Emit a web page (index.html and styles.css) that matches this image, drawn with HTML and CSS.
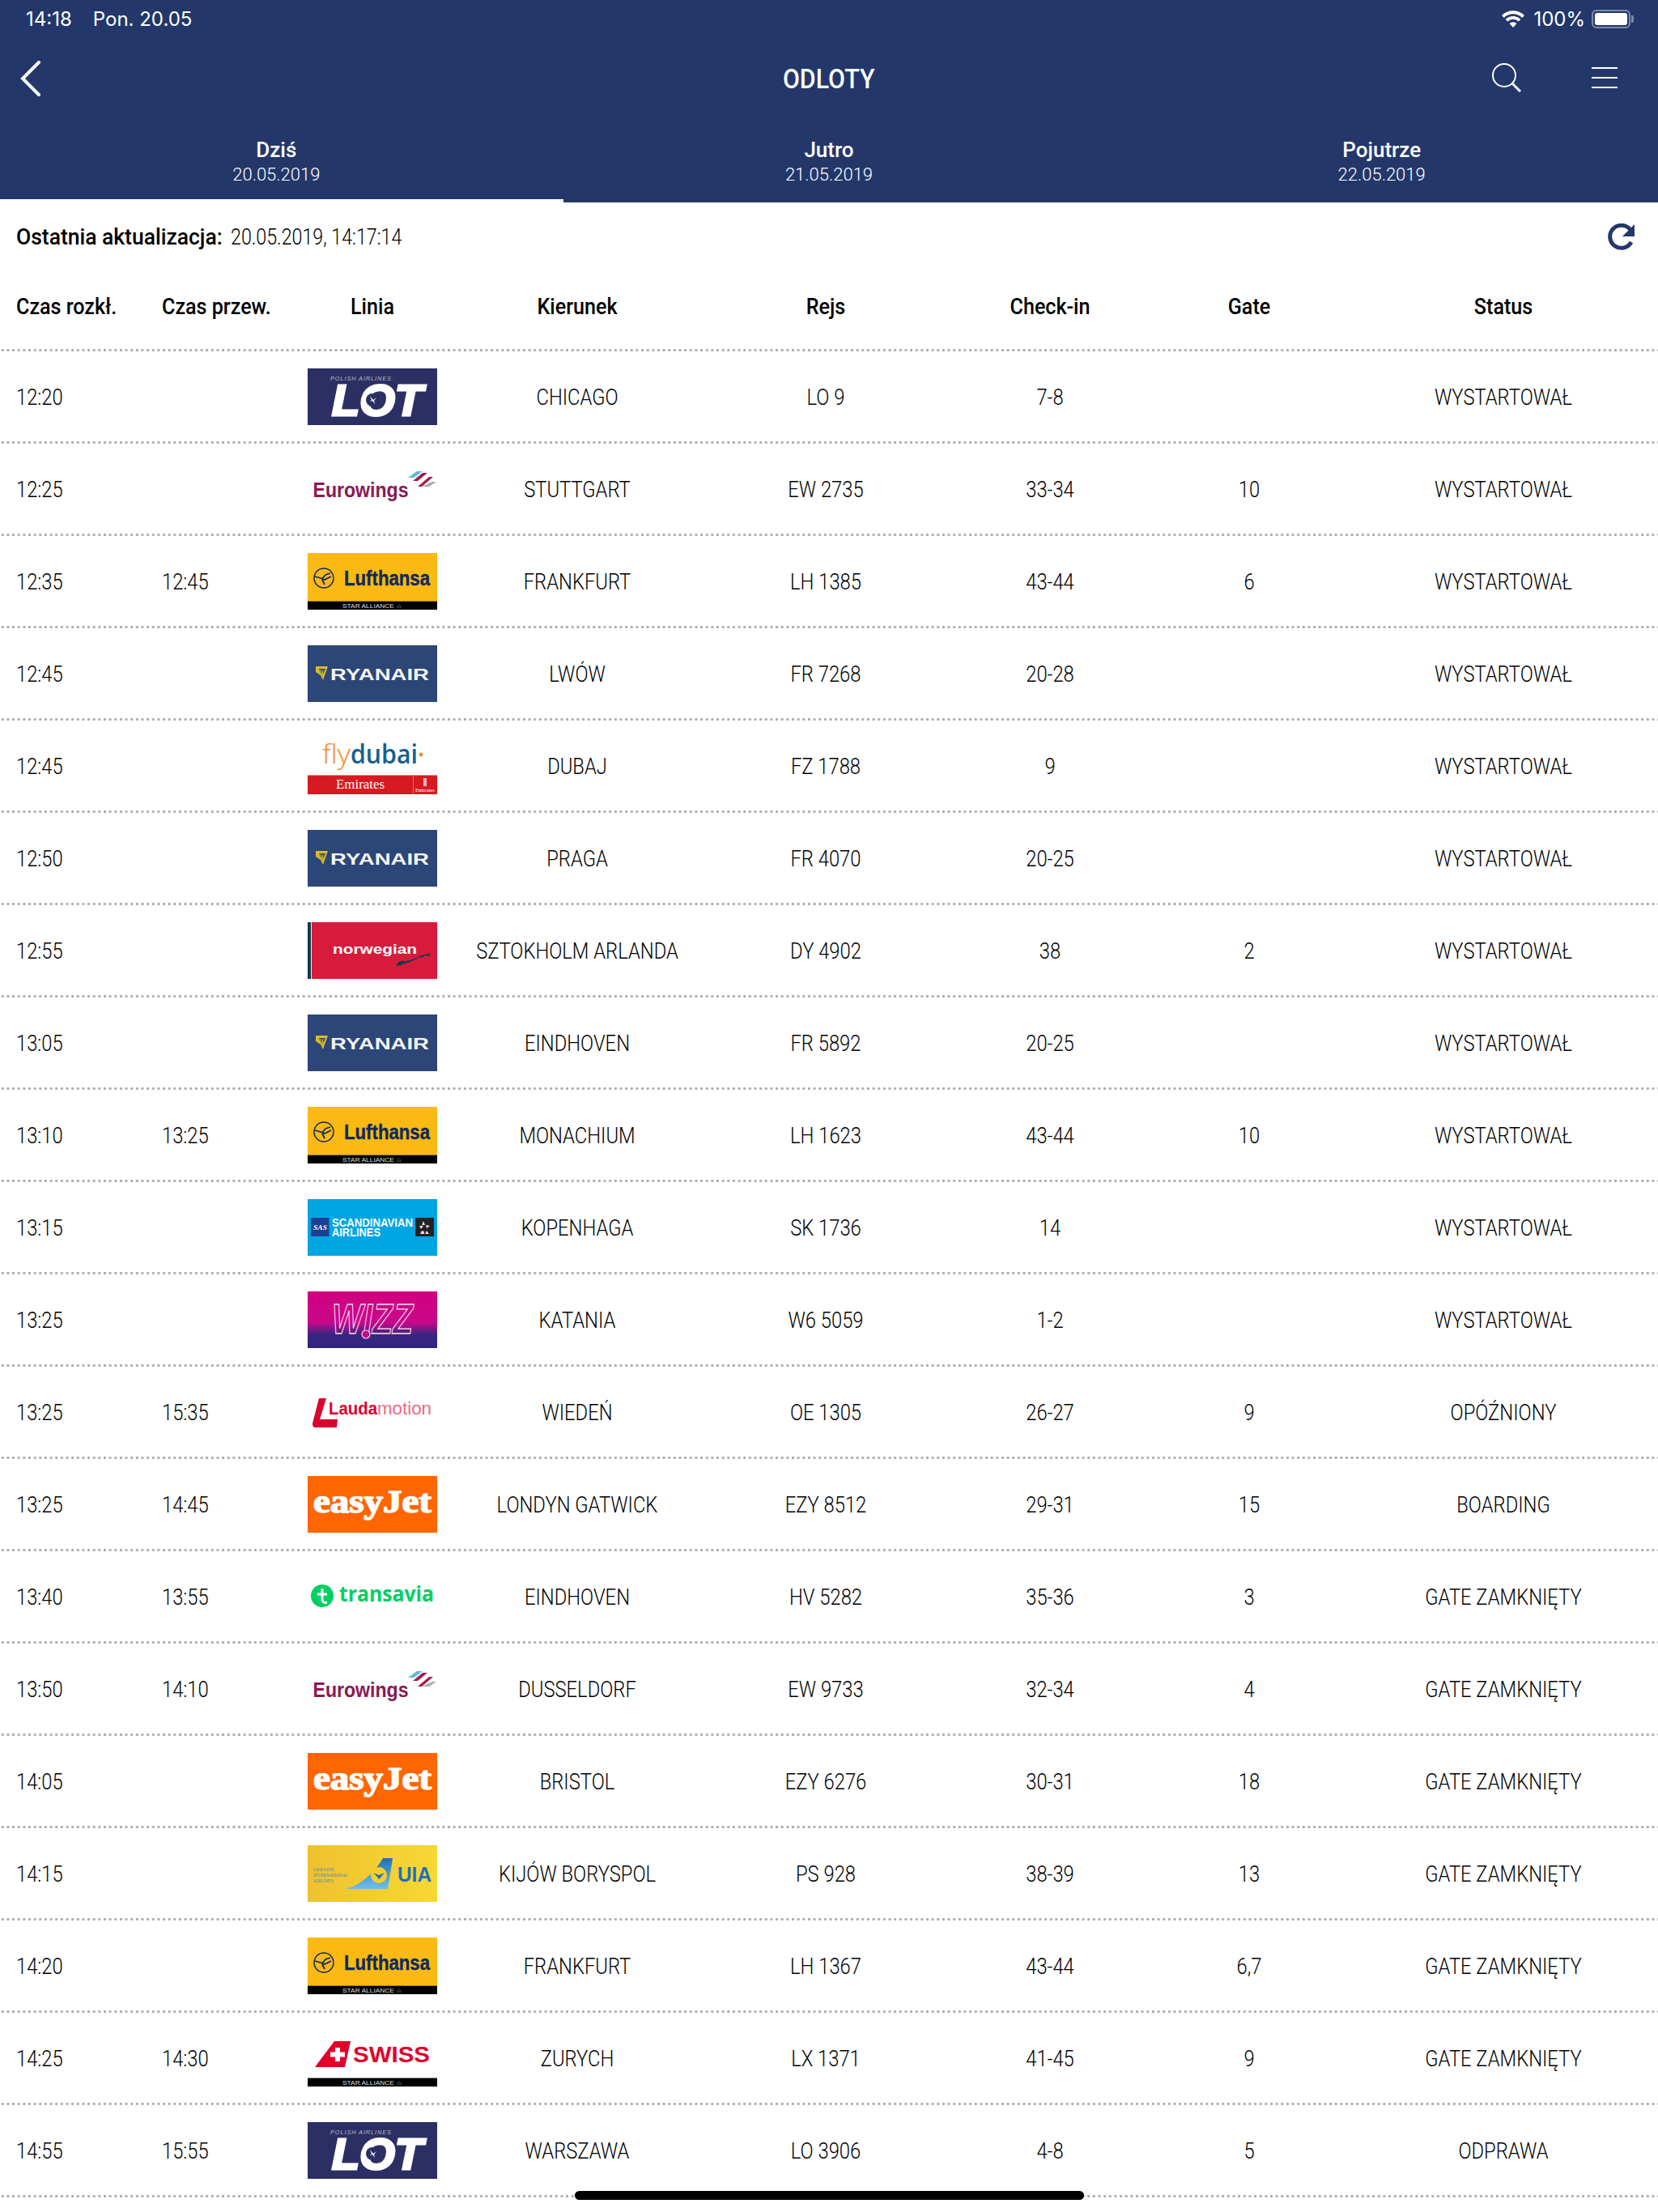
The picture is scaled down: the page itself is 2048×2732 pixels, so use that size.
FILE: index.html
```html
<!DOCTYPE html>
<html lang="pl">
<head>
<meta charset="utf-8">
<title>Odloty</title>
<link rel="stylesheet" href="styles.css">
</head>
<body>
<svg class="defs" width="0" height="0" aria-hidden="true">
  <defs>
    <linearGradient id="wizzg" x1="0" y1="0" x2="0" y2="1"><stop offset="0" stop-color="#d2007f"/><stop offset=".55" stop-color="#c8088a"/><stop offset=".76" stop-color="#3a2580"/><stop offset="1" stop-color="#2f2580"/></linearGradient>
    <linearGradient id="uiag" x1="0" y1="0" x2="1" y2="0"><stop offset="0" stop-color="#efc12f"/><stop offset="1" stop-color="#f7d833"/></linearGradient>
    <linearGradient id="tailg" x1="0" y1="0" x2="0" y2="1"><stop offset="0" stop-color="#1f6fb8"/><stop offset="1" stop-color="#6fc0ea"/></linearGradient>
    <symbol id="lot" viewBox="0 0 160 70">
      <rect width="160" height="70" fill="#2c2f63"/>
      <text x="28" y="14.5" class="l-sans l-it" font-size="7.4" fill="#b9bad0" textLength="75">POLISH AIRLINES</text>
      <text x="30" y="58" class="l-sans l-bi" font-size="54" fill="#fff" stroke="#fff" stroke-width="3" textLength="112" lengthAdjust="spacingAndGlyphs">LOT</text>
      <circle cx="80" cy="39" r="8" fill="#2c2f63"/>
      <path d="M77 34l4 5 4-3-3 4 1 4-3-4-3 1 2-2z" fill="#fff"/>
    </symbol>
    <symbol id="eurowings" viewBox="0 0 160 70">
      <text x="6.5" y="45" class="l-sans l-b" font-size="25" fill="#8a1a52" textLength="118" lengthAdjust="spacingAndGlyphs">Eurowings</text>
      <path d="M124 21l11-8h7l-11 8z" fill="#5cb9dc"/>
      <path d="M130 25l12-10h6l-12 10z" fill="#a01b50"/>
      <path d="M136 32l14-12h5l-14 12z" fill="#a01b50"/>
      <path d="M141 32l13-6 5 0-9 6z" fill="#aaa"/>
    </symbol>
    <symbol id="lufthansa" viewBox="0 0 160 70">
      <rect width="160" height="70" fill="#fbb913"/>
      <rect y="59" width="160" height="1" fill="#a87a10"/>
      <rect y="60" width="160" height="10"/>
      <circle cx="20" cy="31" r="12" fill="none" stroke="#10295c" stroke-width="1.500"/>
      <path d="M9 29l7 2 5 2 8-4M18 32l4-5 6-2M18 33l3 6" fill="none" stroke="#10295c" stroke-width="1.800"/>
      <text x="45" y="40" class="l-sans l-b" font-size="25" fill="#10295c" stroke="#10295c" stroke-width=".4" textLength="106" lengthAdjust="spacingAndGlyphs">Lufthansa</text>
      <text x="43" y="67.500" class="l-sans" font-size="6.500" fill="#ddd" textLength="74" lengthAdjust="spacingAndGlyphs">STAR ALLIANCE ☆</text>
    </symbol>
    <symbol id="ryanair" viewBox="0 0 160 70">
      <rect width="160" height="70" fill="#2c4677"/>
      <path d="M10 26h15l-6 17-3-6-6-4z" fill="#d8bb2e"/>
      <path d="M14 29h8l-4 9z" fill="#2c4677"/>
      <path d="M16 30l2 7M19 30l-1 7" stroke="#d8bb2e"/>
      <text x="28" y="43" class="l-sans l-b" font-size="21" fill="#f4f4f4" textLength="122" lengthAdjust="spacingAndGlyphs">RYANAIR</text>
    </symbol>
    <symbol id="flydubai" viewBox="0 0 160 70">
      <text x="18" y="32" class="l-open l-light" font-size="33" fill="#f58a1f" textLength="35" lengthAdjust="spacingAndGlyphs">fly</text>
      <text x="53" y="32" class="l-open l-sb" font-size="33" fill="#14608f" textLength="83" lengthAdjust="spacingAndGlyphs">dubai</text>
      <circle cx="140" cy="21" r="2.400" fill="#f58a1f"/>
      <rect y="46" width="160" height="24" fill="#d71a21"/>
      <rect y="46" width="160" height="1" fill="#e88"/>
      <rect x="130" y="47" width="1" height="23" fill="#e66"/>
      <text x="35" y="63" class="l-serif" font-size="17" fill="#fff" textLength="60" lengthAdjust="spacingAndGlyphs">Emirates</text>
      <text x="133" y="67" class="l-serif" font-size="7" fill="#fff" textLength="24" lengthAdjust="spacingAndGlyphs">Emirates</text>
      <rect x="143" y="50" width="4" height="10" fill="#f0b0b0"/>
    </symbol>
    <symbol id="norwegian" viewBox="0 0 160 70">
      <rect width="160" height="70" fill="#d81b3c"/>
      <rect width="4" height="70" fill="#0b3a50"/>
      <rect x="4" width="1" height="70" fill="#eee"/>
      <text x="31" y="39" class="l-sans l-b" font-size="17" fill="#fff" textLength="104" lengthAdjust="spacingAndGlyphs">norwegian</text>
      <path d="M110 54c0-5 6-7 9-6 5 1 16-4 26-9-9 6-22 12-28 13-2 1-5 2-7 2z" fill="#0b3a50"/>
      <path d="M137 42l16-4-3 2 2 2-7-1-4 3z" fill="#0b3a50"/>
    </symbol>
    <symbol id="sas" viewBox="0 0 160 70">
      <rect width="160" height="70" fill="#00a6e2"/>
      <rect x="4" y="23" width="22.500" height="23" fill="#1d3f95"/>
      <text x="7" y="38" class="l-serif l-bi" font-size="9" fill="#fff" textLength="17" lengthAdjust="spacingAndGlyphs">SAS</text>
      <text x="30" y="34" class="l-sans l-b" font-size="14.500" fill="#fff" textLength="100" lengthAdjust="spacingAndGlyphs">SCANDINAVIAN</text>
      <text x="30" y="46" class="l-sans l-b" font-size="14.500" fill="#fff" textLength="60" lengthAdjust="spacingAndGlyphs">AIRLINES</text>
      <rect x="133" y="23" width="23" height="23" fill="#222"/>
      <path d="M143 27l2 5h-4zM138 33h5l-3 4zM146 32l5 1-4 3zM141 39l3 1v3l-5 0zM147 39l3 4h-5z" fill="#ddd"/>
    </symbol>
    <symbol id="wizz" viewBox="0 0 160 70">
      <rect width="160" height="70" fill="url(#wizzg)"/>
      <text x="30" y="52" class="l-sans l-bi" font-size="52" fill="none" stroke="#f8d8ee" stroke-width="1.300" textLength="100" lengthAdjust="spacingAndGlyphs">WIZZ</text>
      <circle cx="72" cy="53" r="5" fill="#c8088a" stroke="#f8d8ee" stroke-width="1.200"/>
    </symbol>
    <symbol id="laudamotion" viewBox="0 0 160 70">
      <path d="M14 18h9L15 44h22l-1 10H10c-3 0-4-2-4-5z" fill="#d9042f"/>
      <text x="26" y="38" class="l-sans l-b" font-size="22" fill="#d9042f" textLength="60" lengthAdjust="spacingAndGlyphs">Lauda</text>
      <text x="86" y="38" class="l-sans" font-size="22" fill="#ea6b85" textLength="67" lengthAdjust="spacingAndGlyphs">motion</text>
    </symbol>
    <symbol id="easyjet" viewBox="0 0 160 70">
      <rect width="160" height="70" fill="#ff6600"/>
      <text x="7" y="45" class="l-serif l-b" font-size="40" fill="#fff" stroke="#fff" stroke-width="1.500" textLength="146" lengthAdjust="spacingAndGlyphs">easyJet</text>
    </symbol>
    <symbol id="transavia" viewBox="0 0 160 70">
      <circle cx="18" cy="34" r="14" fill="#00d061"/>
      <path d="M18 25v13c0 4 3 5 6 4M12 32h12" fill="none" stroke="#fff" stroke-width="3"/>
      <text x="39" y="41" class="l-open l-b" font-size="27" fill="#00d061" textLength="117" lengthAdjust="spacingAndGlyphs">transavia</text>
    </symbol>
    <symbol id="uia" viewBox="0 0 160 70">
      <rect width="160" height="70" fill="url(#uiag)"/>
      <g class="l-serif" font-size="5.500" fill="#4c8ab5">
        <text x="7" y="32" textLength="26">UKRAINE</text>
        <text x="7" y="39" textLength="43">INTERNATIONAL</text>
        <text x="7" y="45.500" textLength="25">AIRLINES</text>
      </g>
      <path d="M46 54c20-4 38-22 47-38h12l-6 38z" fill="url(#tailg)"/>
      <circle cx="88" cy="37" r="10" fill="#f6cf2c"/>
      <path d="M81 34l7 3 7-3-4 5-3 3-2-3z" fill="#1f6fb8"/>
      <text x="111" y="45" class="l-sans l-b" font-size="26" fill="#1f6fb8" textLength="42" lengthAdjust="spacingAndGlyphs">UIA</text>
    </symbol>
    <symbol id="swiss" viewBox="0 0 160 70">
      <path d="M9 46L33 14h20l-7 32z" fill="#e2002a"/>
      <path d="M34 22h6v5.500h6v6h-6V39h-6v-5.500h-6v-6h6z" fill="#fff"/>
      <text x="56" y="40" class="l-sans l-b" font-size="27" fill="#e2002a" textLength="95" lengthAdjust="spacingAndGlyphs">SWISS</text>
      <rect y="59" width="160" height="1" fill="#888"/>
      <rect y="60" width="160" height="10"/>
      <text x="43" y="67.500" class="l-sans" font-size="6.500" fill="#ddd" textLength="74" lengthAdjust="spacingAndGlyphs">STAR ALLIANCE ☆</text>
    </symbol>
  </defs>
</svg>

<header class="topbar">
  <div class="status">
    <div class="status-left"><span>14:18</span><span>Pon. 20.05</span></div>
    <div class="status-right">
      <svg class="wifi" viewBox="0 0 28 21"><path d="M14 21l-4.500-5a6.500 6.500 0 0 1 9 0zM7.300 13.500L4.600 10.700a13.500 13.500 0 0 1 18.800 0l-2.700 2.800a9.600 9.600 0 0 0-13.400 0zM2.800 8.900L0 6a20 20 0 0 1 28 0l-2.800 2.900a16 16 0 0 0-22.400 0z" fill="#fff"/></svg>
      <span>100%</span>
      <span class="battery"><span class="battery-fill"></span></span>
    </div>
  </div>
  <div class="nav">
    <svg class="back" viewBox="0 0 26 44"><path d="M23 2L3 22l20 20" fill="none" stroke="#fff" stroke-width="4" stroke-linecap="round"/></svg>
    <h1 class="title">ODLOTY</h1>
    <svg class="search" viewBox="0 0 36 36"><circle cx="15" cy="15" r="14" fill="none" stroke="#fff" stroke-width="2"/><path d="M25 25l10 10" stroke="#fff" stroke-width="3"/></svg>
    <span class="menu"><i></i><i></i><i></i></span>
  </div>
  <nav class="tabs">
    <a class="tab active"><b>Dziś</b><small>20.05.2019</small></a>
    <a class="tab"><b>Jutro</b><small>21.05.2019</small></a>
    <a class="tab"><b>Pojutrze</b><small>22.05.2019</small></a>
  </nav>
</header>

<div class="update">
  <p><strong>Ostatnia aktualizacja:</strong><span class="date">20.05.2019, 14:17:14</span></p>
  <svg class="refresh" viewBox="0 0 36 34"><path d="M31 23a14 14 0 1 1-1-15" fill="none" stroke="#23376a" stroke-width="5"/><path d="M35 1v15H20z" fill="#23376a"/></svg>
</div>

<div class="table">
  <div class="row head"><div class="left">Czas rozkł.</div><div class="left">Czas przew.</div><div>Linia</div><div>Kierunek</div><div>Rejs</div><div>Check-in</div><div>Gate</div><div>Status</div></div>
  <div class="row"><div class="left">12:20</div><div class="left"></div><div class="airline"><svg class="logo"><use href="#lot"/></svg></div><div>CHICAGO</div><div>LO 9</div><div>7-8</div><div></div><div>WYSTARTOWAŁ</div></div>
  <div class="row"><div class="left">12:25</div><div class="left"></div><div class="airline"><svg class="logo"><use href="#eurowings"/></svg></div><div>STUTTGART</div><div>EW 2735</div><div>33-34</div><div>10</div><div>WYSTARTOWAŁ</div></div>
  <div class="row"><div class="left">12:35</div><div class="left">12:45</div><div class="airline"><svg class="logo"><use href="#lufthansa"/></svg></div><div>FRANKFURT</div><div>LH 1385</div><div>43-44</div><div>6</div><div>WYSTARTOWAŁ</div></div>
  <div class="row"><div class="left">12:45</div><div class="left"></div><div class="airline"><svg class="logo"><use href="#ryanair"/></svg></div><div>LWÓW</div><div>FR 7268</div><div>20-28</div><div></div><div>WYSTARTOWAŁ</div></div>
  <div class="row"><div class="left">12:45</div><div class="left"></div><div class="airline"><svg class="logo"><use href="#flydubai"/></svg></div><div>DUBAJ</div><div>FZ 1788</div><div>9</div><div></div><div>WYSTARTOWAŁ</div></div>
  <div class="row"><div class="left">12:50</div><div class="left"></div><div class="airline"><svg class="logo"><use href="#ryanair"/></svg></div><div>PRAGA</div><div>FR 4070</div><div>20-25</div><div></div><div>WYSTARTOWAŁ</div></div>
  <div class="row"><div class="left">12:55</div><div class="left"></div><div class="airline"><svg class="logo"><use href="#norwegian"/></svg></div><div>SZTOKHOLM ARLANDA</div><div>DY 4902</div><div>38</div><div>2</div><div>WYSTARTOWAŁ</div></div>
  <div class="row"><div class="left">13:05</div><div class="left"></div><div class="airline"><svg class="logo"><use href="#ryanair"/></svg></div><div>EINDHOVEN</div><div>FR 5892</div><div>20-25</div><div></div><div>WYSTARTOWAŁ</div></div>
  <div class="row"><div class="left">13:10</div><div class="left">13:25</div><div class="airline"><svg class="logo"><use href="#lufthansa"/></svg></div><div>MONACHIUM</div><div>LH 1623</div><div>43-44</div><div>10</div><div>WYSTARTOWAŁ</div></div>
  <div class="row"><div class="left">13:15</div><div class="left"></div><div class="airline"><svg class="logo"><use href="#sas"/></svg></div><div>KOPENHAGA</div><div>SK 1736</div><div>14</div><div></div><div>WYSTARTOWAŁ</div></div>
  <div class="row"><div class="left">13:25</div><div class="left"></div><div class="airline"><svg class="logo"><use href="#wizz"/></svg></div><div>KATANIA</div><div>W6 5059</div><div>1-2</div><div></div><div>WYSTARTOWAŁ</div></div>
  <div class="row"><div class="left">13:25</div><div class="left">15:35</div><div class="airline"><svg class="logo"><use href="#laudamotion"/></svg></div><div>WIEDEŃ</div><div>OE 1305</div><div>26-27</div><div>9</div><div>OPÓŹNIONY</div></div>
  <div class="row"><div class="left">13:25</div><div class="left">14:45</div><div class="airline"><svg class="logo"><use href="#easyjet"/></svg></div><div>LONDYN GATWICK</div><div>EZY 8512</div><div>29-31</div><div>15</div><div>BOARDING</div></div>
  <div class="row"><div class="left">13:40</div><div class="left">13:55</div><div class="airline"><svg class="logo"><use href="#transavia"/></svg></div><div>EINDHOVEN</div><div>HV 5282</div><div>35-36</div><div>3</div><div>GATE ZAMKNIĘTY</div></div>
  <div class="row"><div class="left">13:50</div><div class="left">14:10</div><div class="airline"><svg class="logo"><use href="#eurowings"/></svg></div><div>DUSSELDORF</div><div>EW 9733</div><div>32-34</div><div>4</div><div>GATE ZAMKNIĘTY</div></div>
  <div class="row"><div class="left">14:05</div><div class="left"></div><div class="airline"><svg class="logo"><use href="#easyjet"/></svg></div><div>BRISTOL</div><div>EZY 6276</div><div>30-31</div><div>18</div><div>GATE ZAMKNIĘTY</div></div>
  <div class="row"><div class="left">14:15</div><div class="left"></div><div class="airline"><svg class="logo"><use href="#uia"/></svg></div><div>KIJÓW BORYSPOL</div><div>PS 928</div><div>38-39</div><div>13</div><div>GATE ZAMKNIĘTY</div></div>
  <div class="row"><div class="left">14:20</div><div class="left"></div><div class="airline"><svg class="logo"><use href="#lufthansa"/></svg></div><div>FRANKFURT</div><div>LH 1367</div><div>43-44</div><div>6,7</div><div>GATE ZAMKNIĘTY</div></div>
  <div class="row"><div class="left">14:25</div><div class="left">14:30</div><div class="airline"><svg class="logo"><use href="#swiss"/></svg></div><div>ZURYCH</div><div>LX 1371</div><div>41-45</div><div>9</div><div>GATE ZAMKNIĘTY</div></div>
  <div class="row"><div class="left">14:55</div><div class="left">15:55</div><div class="airline"><svg class="logo"><use href="#lot"/></svg></div><div>WARSZAWA</div><div>LO 3906</div><div>4-8</div><div>5</div><div>ODPRAWA</div></div>
</div>
<div class="home-indicator"></div>
</body>
</html>
```
FILE: styles.css
```css
* { box-sizing: border-box; }
html, body { margin: 0; padding: 0; }
body {
  width: 2048px;
  height: 2732px;
  overflow: hidden;
  position: relative;
  background: #fff;
  color: #000;
  font-family: "Roboto", "Noto Sans", sans-serif;
  font-weight: 300;
  font-size: 27px;
}
.defs { position: absolute; }

.topbar { background: #23376a; color: #fff; height: 250px; display: flex; flex-direction: column; }
.status { height: 46px; display: flex; justify-content: space-between; align-items: center; padding: 0 34px 0 32px; font-family: "Inter", sans-serif; font-weight: 400; font-size: 24px; }
.status-left { display: flex; gap: 26px; }
.status-right { display: flex; align-items: center; gap: 8px; }
.wifi { width: 28px; height: 21px; margin-right: 3px; }
.battery { width: 48px; height: 23px; border: 2px solid #7f8bac; border-radius: 6px; padding: 2px; display: block; position: relative; }
.battery::after { content: ""; position: absolute; right: -6px; top: 5px; width: 3px; height: 9px; background: #7f8bac; border-radius: 0 2px 2px 0; }
.battery-fill { display: block; height: 100%; background: #fff; border-radius: 3px; }

.nav { height: 102px; display: flex; align-items: center; justify-content: center; position: relative; }
.back { position: absolute; left: 25px; top: 29px; width: 26px; height: 44px; }
.title { margin: 0; font-size: 33px; font-weight: 500; transform: scaleX(.92); }
.search { position: absolute; left: 1843px; top: 32px; width: 36px; height: 36px; }
.menu { position: absolute; left: 1966px; top: 37px; width: 32px; display: flex; flex-direction: column; gap: 10px; }
.menu i { display: block; height: 2px; background: #fff; }

.tabs { flex: 1; display: grid; grid-template-columns: repeat(3, 1fr); position: relative; }
.tab { display: flex; flex-direction: column; align-items: center; padding-top: 20px; }
.tab b { font-size: 26px; font-weight: 500; line-height: 34px; }
.tab small { font-size: 22px; font-weight: 300; line-height: 28px; }
.tab.active { position: relative; }
.tab.active::after { content: ""; position: absolute; left: 0; bottom: 0; width: 696px; height: 4px; background: #fff; }

.update { height: 88px; display: flex; align-items: center; justify-content: space-between; padding: 0 28px 2px 20px; }
.update p { margin: 0; font-size: 27px; display: flex; gap: 8px; }
.update strong { font-weight: 500; transform: scaleX(.98); transform-origin: left; margin-right: -3px; }
.date { transform: scaleX(.86); transform-origin: left; }
.refresh { width: 36px; height: 34px; }

.row {
  display: grid;
  grid-template-columns: 200px 160px 200px 306px 308px 246px 246px 382px;
  align-items: center;
  height: 114px;
  text-align: center;
  background: radial-gradient(circle at 3.300px 1.500px, #a8a8a8 1.300px, transparent 1.700px) left bottom / 6.650px 3px repeat-x;
}
.row > div { transform: scaleX(.88); }
.row > .airline { transform: none; }
.row.head { height: 96px; padding-bottom: 14px; font-weight: 500; }
.row.head > div { transform: scaleX(.93); }
.row > .left { text-align: left; transform-origin: 0 50%; }
.row > .left:first-child { padding-left: 20px; transform-origin: 20px 50%; }
.logo { display: block; width: 160px; height: 70px; margin: 0 auto 2px; }

.l-sans { font-family: "Liberation Sans", sans-serif; }
.l-open { font-family: "Open Sans", sans-serif; }
.l-serif { font-family: "Liberation Serif", serif; }
.l-b { font-weight: 700; }
.l-it { font-style: italic; }
.l-bi { font-weight: 700; font-style: italic; }
.l-light { font-weight: 300; }
.l-sb { font-weight: 600; }

.home-indicator { position: absolute; left: 710px; top: 2706px; width: 629px; height: 11px; background: #000; border-radius: 6px; }
```
